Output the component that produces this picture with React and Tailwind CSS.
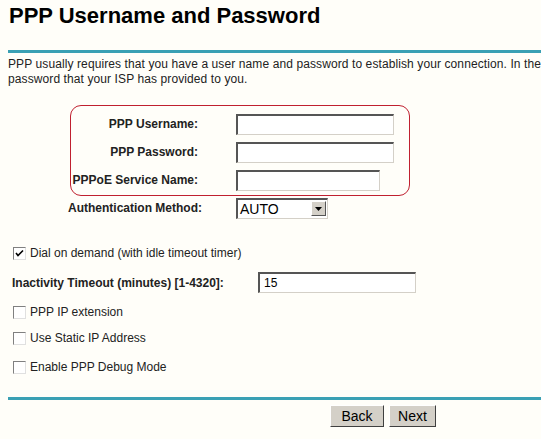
import React from "react";

const Field = ({ label, w = "w-[158px]" }) => (
  <div className="flex items-center h-7">
    <div className="w-[127px] text-right font-bold whitespace-nowrap">{label}</div>
    <input
      className={`ml-[38px] ${w} h-[21px] bg-white border-t-2 border-l-2 border-r border-b border-t-[#555] border-l-[#555] border-r-[#d4d0c8] border-b-[#d4d0c8] outline-none`}
    />
  </div>
);

const Check = ({ label, checked }) => (
  <label className="flex items-center gap-[4px] pl-[13px] h-[18px]">
    <span className="w-[13px] h-[13px] bg-white border border-t-[#808080] border-l-[#808080] border-r-[#e0e0e0] border-b-[#e0e0e0] flex items-center justify-center">
      {checked && (
        <svg width="9" height="9" viewBox="0 0 9 9">
          <path d="M1 4 L3 6.5 L8 1.5" stroke="#000" strokeWidth="1.6" fill="none" />
        </svg>
      )}
    </span>
    <span className="whitespace-nowrap">{label}</span>
  </label>
);

export default function App() {
  return (
    <div className="w-[541px] h-[439px] overflow-hidden bg-[#fffef9] text-[12px] leading-[18px] text-[#222] font-['Liberation_Sans',Arial,sans-serif]">
      <h1 className="pl-[9px] pt-[4px] text-[22px] font-bold text-black leading-6">
        PPP Username and Password
      </h1>
      <div className="ml-[8px] mt-[22px] h-[3px] bg-[#3aa0b4]" />
      <p className="pl-[8px] pt-[4px] leading-[15px] whitespace-nowrap tracking-[0.1px]">
        PPP usually requires that you have a user name and password to establish your connection. In the
        <br />
        password that your ISP has provided to you.
      </p>

      <div className="ml-[70px] mt-[18px] w-[340px] h-[91px] border border-[#c02030] rounded-[11px] pt-[4px] flex flex-col">
        <Field label="PPP Username:" />
        <Field label="PPP Password:" />
        <Field label="PPPoE Service Name:" w="w-[144px]" />
      </div>

      <div className="flex items-center h-[24px] mt-[0px] ml-[68px]">
        <div className="w-[130px] text-right font-bold whitespace-nowrap">Authentication Method:</div>
        <div className="ml-[38px] w-[92px] h-[21px] bg-white border-t-2 border-l-2 border-r border-b border-t-[#555] border-l-[#555] border-r-[#d4d0c8] border-b-[#d4d0c8] flex items-center justify-between pl-[2px] pr-[1px]">
          <span className="text-[14px] text-black">AUTO</span>
          <span className="w-[15px] h-[15px] bg-[#d4d0c8] border border-t-white border-l-white border-r-[#555] border-b-[#555] flex items-center justify-center">
            <svg width="7" height="4" viewBox="0 0 7 4">
              <path d="M0 0 H7 L3.5 4 Z" fill="#000" />
            </svg>
          </span>
        </div>
      </div>

      <div className="mt-[24px]">
        <Check label="Dial on demand (with idle timeout timer)" checked />
      </div>

      <div className="flex items-center mt-[10px] pl-[12px]">
        <div className="w-[246px] font-bold whitespace-nowrap">Inactivity Timeout (minutes) [1-4320]:</div>
        <div className="w-[158px] h-[21px] bg-white border-t-2 border-l-2 border-r border-b border-t-[#555] border-l-[#555] border-r-[#d4d0c8] border-b-[#d4d0c8] pl-[4px] flex items-center text-black">
          15
        </div>
      </div>

      <div className="mt-[10px] flex flex-col">
        <Check label="PPP IP extension" />
        <div className="mt-[8px]">
          <Check label="Use Static IP Address" />
        </div>
        <div className="mt-[11px]">
          <Check label="Enable PPP Debug Mode" />
        </div>
      </div>

      <div className="ml-[8px] mt-[21px] h-[3px] bg-[#3aa0b4]" />

      <div className="flex gap-[5px] pl-[330px] mt-[5px]">
        <button className="w-[54px] h-[22px] bg-[#d4d0c8] text-[14px] text-black border border-t-white border-l-white border-r-[#404040] border-b-[#404040]">
          Back
        </button>
        <button className="w-[47px] h-[22px] bg-[#d4d0c8] text-[14px] text-black border border-t-white border-l-white border-r-[#404040] border-b-[#404040]">
          Next
        </button>
      </div>
    </div>
  );
}
